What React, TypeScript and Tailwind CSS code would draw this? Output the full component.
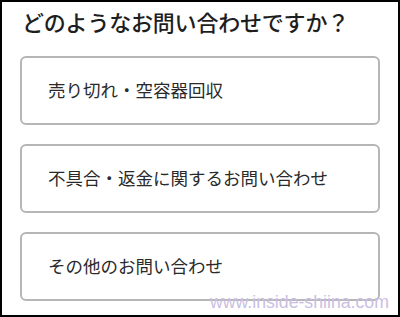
import React from "react";

const items = ["売り切れ・空容器回収", "不具合・返金に関するお問い合わせ", "その他のお問い合わせ"];

export default function App() {
  return (
    <div
      className="relative w-[400px] h-[317px] overflow-hidden border-2 border-black bg-white"
      style={{ fontFamily: '"Noto Sans CJK JP", "Noto Sans", sans-serif' }}
    >
      <div className="px-[18px] pt-[8px]">
        <h1 className="pl-[2px] text-[22px] leading-[22px] font-medium text-[#1e1e1e] tracking-[-0.2px]">
          どのようなお問い合わせですか？
        </h1>
        <div className="mt-[24px] flex flex-col gap-[19px]">
          {items.map((t) => (
            <div
              key={t}
              className="h-[69px] flex items-center rounded-[6px] border-2 border-[#b6b6b6] pl-[26px] text-[17.5px] text-[#2a2a2a]"
            >
              {t}
            </div>
          ))}
        </div>
      </div>
      <div
        className="absolute left-[208px] top-[292px] text-[17.7px] leading-none text-[#cabfe2] font-light"
        style={{ fontFamily: '"Liberation Sans", Arial, sans-serif' }}
      >
        www.inside-shiina.com
      </div>
    </div>
  );
}
